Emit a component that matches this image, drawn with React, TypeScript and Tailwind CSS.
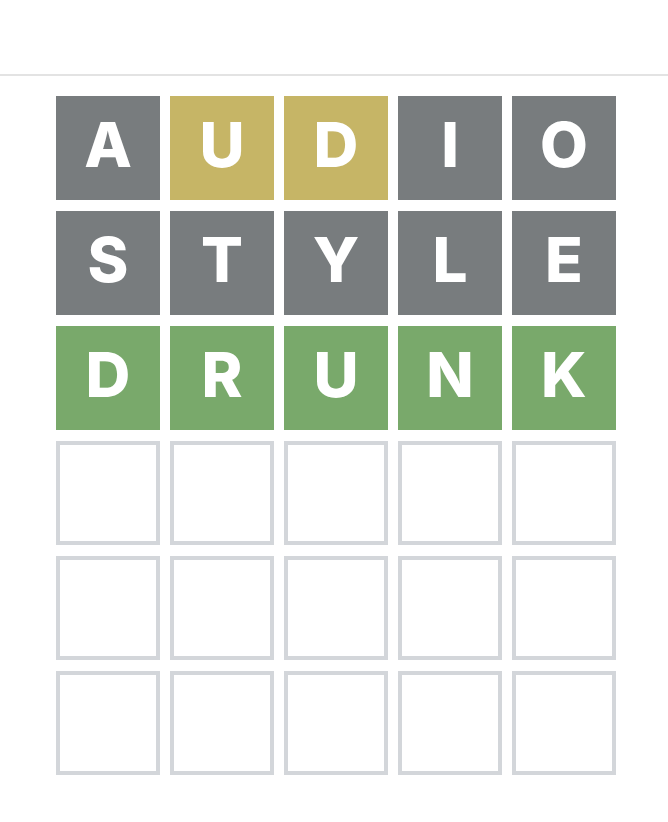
import React from 'react';

type State = 'absent' | 'present' | 'correct' | 'empty';

const rows: { letter: string; state: State }[][] = [
  [
    { letter: 'A', state: 'absent' },
    { letter: 'U', state: 'present' },
    { letter: 'D', state: 'present' },
    { letter: 'I', state: 'absent' },
    { letter: 'O', state: 'absent' },
  ],
  [
    { letter: 'S', state: 'absent' },
    { letter: 'T', state: 'absent' },
    { letter: 'Y', state: 'absent' },
    { letter: 'L', state: 'absent' },
    { letter: 'E', state: 'absent' },
  ],
  [
    { letter: 'D', state: 'correct' },
    { letter: 'R', state: 'correct' },
    { letter: 'U', state: 'correct' },
    { letter: 'N', state: 'correct' },
    { letter: 'K', state: 'correct' },
  ],
  ...Array.from({ length: 3 }, () =>
    Array.from({ length: 5 }, () => ({ letter: '', state: 'empty' as State }))
  ),
];

const tileClass: Record<State, string> = {
  absent: 'bg-[#787c7e] text-white',
  present: 'bg-[#c6b566] text-white',
  correct: 'bg-[#79a96b] text-white',
  empty: 'bg-white border-4 border-[#d3d6da]',
};

export default function App() {
  return (
    <div className="min-h-screen bg-white font-['Inter','Liberation_Sans',Arial,sans-serif]">
      <header className="h-[76px] border-b-2 border-[#e3e3e3]" />

      <div className="pt-[20px] pl-[56px]">
        <div className="grid grid-cols-[repeat(5,104px)] gap-x-[10px] gap-y-[11px]">
          {rows.map((row, r) =>
            row.map((tile, c) => (
              <div
                key={`${r}-${c}`}
                className={`w-[104px] h-[104px] flex items-center justify-center pb-[6px] text-[62px] font-extrabold leading-none ${tileClass[tile.state]}`}
              >
                {tile.letter}
              </div>
            ))
          )}
        </div>
      </div>
    </div>
  );
}
